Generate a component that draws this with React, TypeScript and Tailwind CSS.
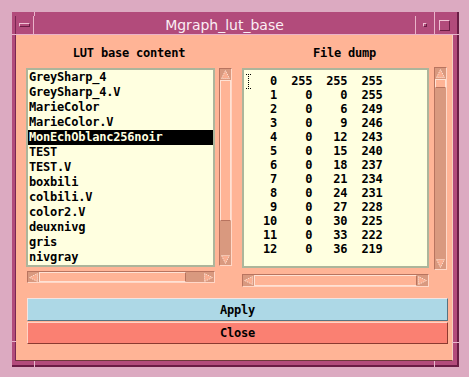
import React from "react";

const lutNames = [
  "GreySharp_4",
  "GreySharp_4.V",
  "MarieColor",
  "MarieColor.V",
  "MonEchOblanc256noir",
  "TEST",
  "TEST.V",
  "boxbili",
  "colbili.V",
  "color2.V",
  "deuxnivg",
  "gris",
  "nivgray",
];

const dump: [number, number, number, number][] = [
  [0, 255, 255, 255],
  [1, 0, 0, 255],
  [2, 0, 6, 249],
  [3, 0, 9, 246],
  [4, 0, 12, 243],
  [5, 0, 15, 240],
  [6, 0, 18, 237],
  [7, 0, 21, 234],
  [8, 0, 24, 231],
  [9, 0, 27, 228],
  [10, 0, 30, 225],
  [11, 0, 33, 222],
  [12, 0, 36, 219],
];

const pad = (n: number, w: number) => String(n).padStart(w, " ");

type Dir = "up" | "down" | "left" | "right";

function Arrow({ dir, size = 12 }: { dir: Dir; size?: number }) {
  const s = size;
  const pts: Record<Dir, string> = {
    up: `${s / 2},1.5 ${s - 1.5},${s - 1.5} 1.5,${s - 1.5}`,
    down: `1.5,1.5 ${s - 1.5},1.5 ${s / 2},${s - 1.5}`,
    left: `1.5,${s / 2} ${s - 1.5},1.5 ${s - 1.5},${s - 1.5}`,
    right: `1.5,1.5 ${s - 1.5},${s / 2} 1.5,${s - 1.5}`,
  };
  return (
    <svg width={s} height={s} viewBox={`0 0 ${s} ${s}`} className="block shrink-0">
      <polygon points={pts[dir]} fill="#f9ae91" stroke="#ffe6da" strokeWidth="1" strokeDasharray="1 1" />
    </svg>
  );
}

function VScroll({ h, thumb, className = "" }: { h: string; thumb: string; className?: string }) {
  return (
    <div className={`flex w-[13px] flex-col border border-t-[#b8745f] border-l-[#b8745f] border-b-[#ffd8c8] border-r-[#ffd8c8] bg-[#d9997f] ${h} ${className}`}>
      <Arrow dir="up" size={11} />
      <div className={`border-t border-l border-[#ffe2d4] border-r border-r-[#ffe2d4] border-b border-b-[#b8745f] bg-[#ffb496] ${thumb}`} />
      <div className="flex-1" />
      <Arrow dir="down" size={11} />
    </div>
  );
}

function HScroll({ w, h, thumb, className = "" }: { w: string; h: string; thumb: string; className?: string }) {
  return (
    <div className={`flex flex-row border border-t-[#b8745f] border-l-[#b8745f] border-b-[#ffd8c8] border-r-[#ffd8c8] bg-[#d9997f] ${w} ${h} ${className}`}>
      <Arrow dir="left" size={11} />
      <div className={`border-t border-l border-[#ffe2d4] border-b border-b-[#ffe2d4] border-r border-r-[#b8745f] bg-[#ffb496] ${thumb}`} />
      <div className="flex-1" />
      <Arrow dir="right" size={11} />
    </div>
  );
}

function Mark({ className }: { className: string }) {
  return <span className={`absolute bg-[#e9b6cc] ${className}`} />;
}

export default function App() {
  return (
    <div className="h-[377px] w-[469px] bg-[#dcaac1] pl-[12px] pt-[12px] font-['DejaVu_Sans_Mono',monospace]">
      <div className="relative flex h-[355px] w-[447px] flex-col border-b-2 border-r-2 border-[#6a1c44] bg-[#b24b7b] pb-[4px] pl-[3px] pr-[4px] pt-[4px]">
        <Mark className="left-[22px] top-0 h-[4px] w-[1px]" />
        <Mark className="left-0 top-[22px] h-[1px] w-[4px]" />
        <Mark className="left-[422px] top-0 h-[4px] w-[1px]" />
        <Mark className="left-[440px] top-[22px] h-[1px] w-[7px]" />
        <Mark className="left-[22px] top-[349px] h-[6px] w-[1px]" />
        <Mark className="left-[422px] top-[349px] h-[6px] w-[1px]" />
        <Mark className="left-0 top-[329px] h-[1px] w-[4px]" />
        <Mark className="left-[440px] top-[330px] h-[1px] w-[7px]" />

        <div className="flex flex-1 flex-col border-l border-[#7a2752]">
          {/* title bar */}
          <div className="flex h-[19px] border-b border-[#eab3c9]">
            <div className="flex w-[18px] items-center justify-center border-r border-[#eab3c9]">
              <span className="block h-[4px] w-[11px] border border-b-[#6a1c44] border-l-[#f0c0d4] border-r-[#6a1c44] border-t-[#f0c0d4] bg-[#b24b7b]" />
            </div>
            <div className="flex flex-1 items-center justify-center font-['DejaVu_Sans',sans-serif] text-[14px] leading-none text-[#fbeef4]">
              Mgraph_lut_base
            </div>
            <div className="flex w-[19px] items-center justify-center border-l border-[#eab3c9]">
              <span className="block h-[4px] w-[4px] border border-b-[#6a1c44] border-l-[#f0c0d4] border-r-[#6a1c44] border-t-[#f0c0d4]" />
            </div>
            <div className="flex w-[19px] items-center justify-center border-l border-[#eab3c9]">
              <span className="block h-[11px] w-[11px] border border-b-[#6a1c44] border-l-[#f0c0d4] border-r-[#6a1c44] border-t-[#f0c0d4]" />
            </div>
          </div>

          {/* content */}
          <div className="flex flex-1 flex-col border-b border-r border-b-[#6d3a3a] border-r-[#f5d0c0] bg-[#ffb496] pl-[10px] pt-[11px] text-[12px] font-bold tracking-[-0.2px] text-black">
            <div className="flex gap-[10px]">
              {/* left column */}
              <div className="flex w-[206px] flex-col">
                <div className="h-[14px] text-center leading-[14px]">LUT base content</div>
                <div className="mt-[8px] flex gap-[4px]">
                  <div className="h-[199px] w-[189px] overflow-hidden border-2 border-[#adb59b] bg-[#ffffe0]">
                    {lutNames.map((n) => (
                      <div
                        key={n}
                        className={`h-[15px] whitespace-pre pl-[1px] leading-[15px] ${
                          n === "MonEchOblanc256noir" ? "bg-black text-[#ffffe0]" : ""
                        }`}
                      >
                        {n}
                      </div>
                    ))}
                  </div>
                  <VScroll h="h-[198px]" thumb="h-[141px]" />
                </div>
                <HScroll w="w-[188px]" h="h-[12px]" thumb="w-[147px]" className="ml-[1px] mt-[4px]" />
              </div>

              {/* right column */}
              <div className="flex w-[205px] flex-col">
                <div className="h-[14px] text-center leading-[14px]">File dump</div>
                <div className="mt-[8px] flex h-[200px] gap-[5px]">
                  <div className="relative h-[200px] w-[187px] overflow-hidden border-2 border-[#adb59b] bg-[#ffffe0] pl-[5px] pt-[4px]">
                    <svg width="5" height="15" className="absolute left-[2px] top-[4px]">
                      <path d="M0 0.5H5M0 14.5H5M2.5 0V15" stroke="#000" strokeWidth="1" strokeDasharray="1 1" />
                    </svg>
                    {dump.map(([i, r, g, b]) => (
                      <div key={i} className="h-[14px] whitespace-pre leading-[14px]">
                        {pad(i, 4) + pad(r, 5) + pad(g, 5) + pad(b, 5)}
                      </div>
                    ))}
                  </div>
                  <VScroll h="h-[203px]" thumb="h-[9px]" className="-mt-[1px] shrink-0" />
                </div>
                <HScroll w="w-[187px]" h="h-[13px]" thumb="w-[163px]" className="mt-[6px]" />
              </div>
            </div>

            <div className="ml-[1px] mt-[11px] flex w-[421px] flex-col gap-[1px]">
              <button className="flex h-[23px] items-center justify-center border border-b-[#557382] border-l-[#f4e4e2] border-r-[#557382] border-t-[#f4e4e2] bg-[#add8e6]">
                Apply
              </button>
              <button className="flex h-[22px] items-center justify-center border border-b-[#8b3a30] border-l-[#ffd2c6] border-r-[#8b3a30] border-t-[#ffd2c6] bg-[#fa8072]">
                Close
              </button>
            </div>
          </div>
        </div>
      </div>
    </div>
  );
}
